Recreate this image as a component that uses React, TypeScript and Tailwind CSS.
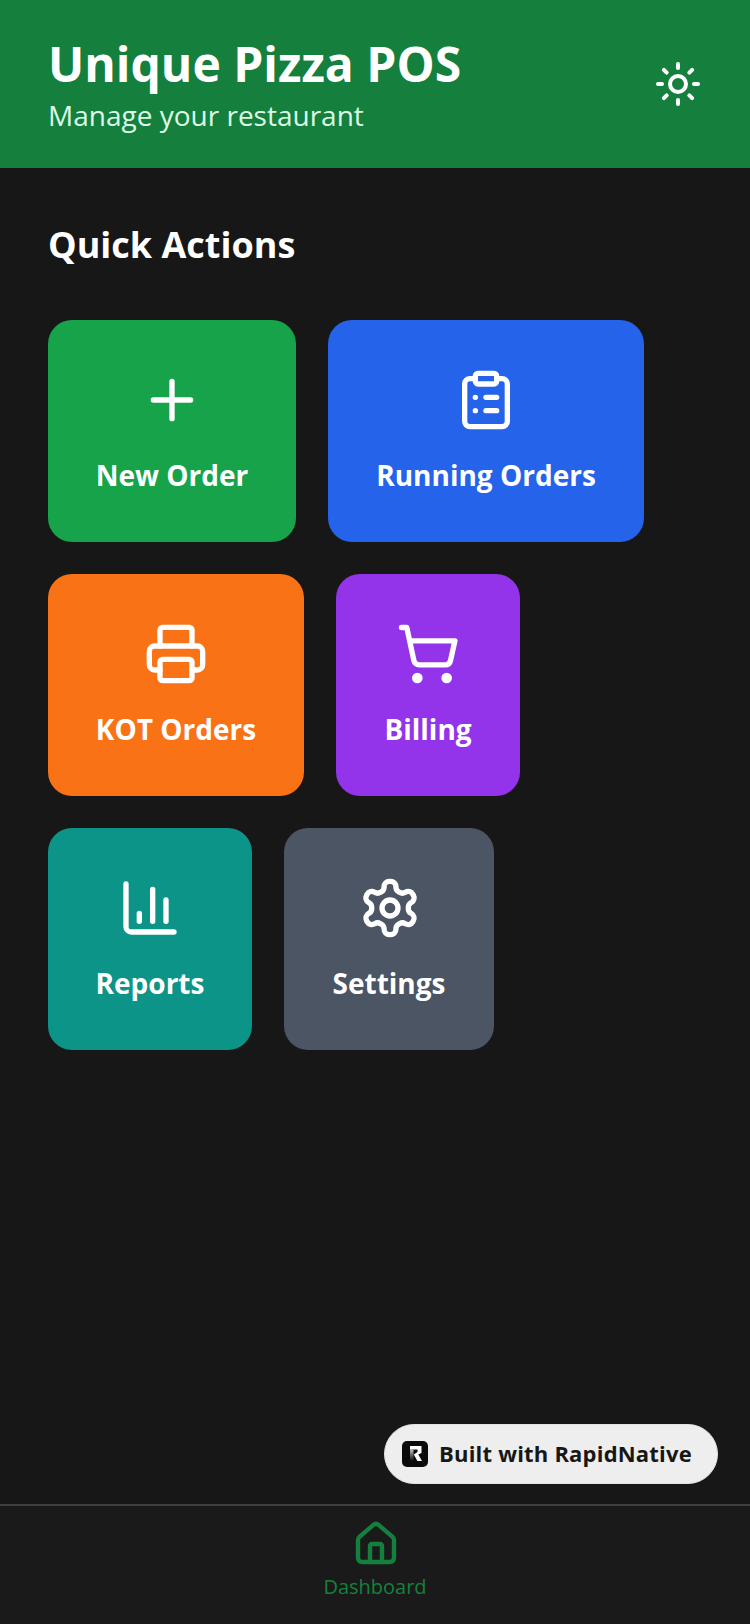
import { Sun, Plus, ClipboardList, Printer, ShoppingCart, ChartColumn, House } from "lucide-react";

const Gear = ({ size, color, strokeWidth }: { size: number; color: string; strokeWidth: number }) => (
  <svg width={size} height={size} viewBox="0 0 24 24" fill="none" stroke={color} strokeWidth={strokeWidth} strokeLinecap="round" strokeLinejoin="round" className="ml-[2px]">
    <path d="M12.22 2h-.44a2 2 0 0 0-2 2v.18a2 2 0 0 1-1 1.73l-.43.25a2 2 0 0 1-2 0l-.15-.08a2 2 0 0 0-2.73.73l-.22.38a2 2 0 0 0 .73 2.73l.15.1a2 2 0 0 1 1 1.72v.51a2 2 0 0 1-1 1.74l-.15.09a2 2 0 0 0-.73 2.73l.22.38a2 2 0 0 0 2.73.73l.15-.08a2 2 0 0 1 2 0l.43.25a2 2 0 0 1 1 1.73V20a2 2 0 0 0 2 2h.44a2 2 0 0 0 2-2v-.18a2 2 0 0 1 1-1.73l.43-.25a2 2 0 0 1 2 0l.15.08a2 2 0 0 0 2.73-.73l.22-.39a2 2 0 0 0-.73-2.73l-.15-.08a2 2 0 0 1-1-1.74v-.5a2 2 0 0 1 1-1.74l.15-.09a2 2 0 0 0 .73-2.73l-.22-.38a2 2 0 0 0-2.73-.73l-.15.08a2 2 0 0 1-2 0l-.43-.25a2 2 0 0 1-1-1.73V4a2 2 0 0 0-2-2z" />
    <circle cx="12" cy="12" r="3" />
  </svg>
);

const Card = ({ label, bg, Icon }: { label: string; bg: string; Icon: any }) => (
  <div className={`flex h-[222px] flex-col items-center rounded-3xl pt-12 ${bg}`}>
    <Icon size={64} color="#ffffff" strokeWidth={2} />
    <span className="mt-[22px] text-[28px] leading-[42px] font-bold whitespace-nowrap text-white">{label}</span>
  </div>
);

export default function App() {
  return (
    <div className="relative flex h-[1624px] w-[750px] flex-col overflow-hidden bg-[#171717] font-['Open_Sans',sans-serif]">
      <header className="flex h-[168px] items-center justify-between bg-[#15803d] px-12">
        <div className="flex flex-col pb-[2px]">
          <h1 className="text-[48px] leading-[64px] font-bold text-white">Unique Pizza POS</h1>
          <p className="text-[28px] leading-[38px] text-[#dcfce7]">Manage your restaurant</p>
        </div>
        <Sun size={48} color="#ffffff" strokeWidth={2} />
      </header>
      <main className="flex-1 px-12 pt-[50px]">
        <h2 className="text-[36px] leading-[54px] font-bold text-white">Quick Actions</h2>
        <div className="mt-[48px] flex flex-col gap-8">
          <div className="flex gap-8">
            <div className="w-[248px]"><Card label="New Order" bg="bg-[#16a34a]" Icon={Plus} /></div>
            <div className="w-[316px]"><Card label="Running Orders" bg="bg-[#2563eb]" Icon={ClipboardList} /></div>
          </div>
          <div className="flex gap-8">
            <div className="w-[256px]"><Card label="KOT Orders" bg="bg-[#f97316]" Icon={Printer} /></div>
            <div className="w-[184px]"><Card label="Billing" bg="bg-[#9333ea]" Icon={ShoppingCart} /></div>
          </div>
          <div className="flex gap-8">
            <div className="w-[204px]"><Card label="Reports" bg="bg-[#0d9488]" Icon={ChartColumn} /></div>
            <div className="w-[210px]"><Card label="Settings" bg="bg-[#4b5563]" Icon={Gear} /></div>
          </div>
        </div>
      </main>
      <nav className="flex h-[120px] flex-col items-center border-t-2 border-[#404040] bg-[#1a1a1a] pt-[14px]">
        <House size={48} color="#15803d" strokeWidth={2.2} className="ml-[2px]" />
        <span className="mt-[4px] text-[20px] leading-[30px] text-[#15803d]">Dashboard</span>
      </nav>
      <div className="absolute top-[1424px] left-[384px] flex h-[60px] w-[334px] items-center gap-[11px] rounded-full border border-[#e2e2e2] bg-[#eeeeee] pl-[17px]">
        <svg width="26" height="26" viewBox="0 0 26 26">
          <defs>
            <linearGradient id="stem" x1="0" y1="0" x2="0" y2="1">
              <stop offset="0" stopColor="#bdbdbd" />
              <stop offset="1" stopColor="#0a0a0a" />
            </linearGradient>
          </defs>
          <rect width="26" height="26" rx="5" fill="#0a0a0a" />
          <path d="M8 8.5h3.5V20H8z" fill="url(#stem)" />
          <path d="M8 5h11.5v7l-3.2 1.6L20 20h-4.6l-3.6-6.6L15.5 11V8.5H8z" fill="#ffffff" />
        </svg>
        <span className="pb-[2px] text-[22px] leading-[32px] font-bold tracking-[0.2px] whitespace-nowrap text-[#171717]">Built with RapidNative</span>
      </div>
    </div>
  );
}
